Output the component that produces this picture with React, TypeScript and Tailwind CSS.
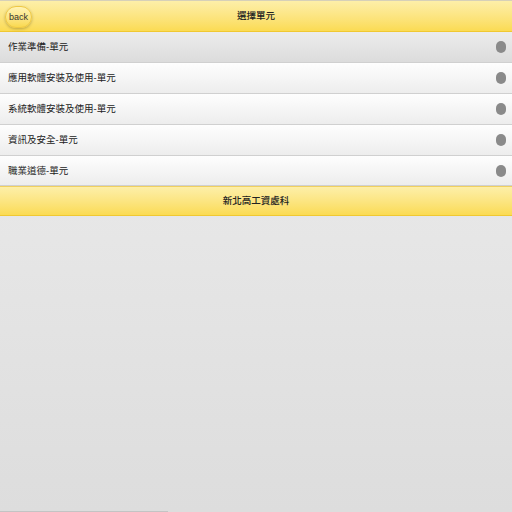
const units = [
  "作業準備-單元",
  "應用軟體安裝及使用-單元",
  "系統軟體安裝及使用-單元",
  "資訊及安全-單元",
  "職業道德-單元",
];

export default function App() {
  return (
    <div
      className="flex h-[512px] w-[512px] flex-col overflow-hidden bg-gradient-to-b from-[#eeeeee] to-[#dddddd] text-[#333]"
      style={{ fontFamily: '"Liberation Sans", "Noto Sans CJK TC", sans-serif' }}
    >
      {/* header */}
      <div className="relative flex h-8 shrink-0 items-center justify-center border-t border-b border-t-[#d6d0b8] border-b-[#f0c832] bg-gradient-to-b from-[#fdefa8] to-[#fbdb52]">
        <button className="absolute top-[5px] left-[5px] flex h-[22px] w-[27px] items-center justify-center rounded-full border border-[#eec845] bg-gradient-to-b from-[#fff3b4] to-[#fad94e] text-[9px] leading-none text-[#333] shadow-[0_1px_3px_rgba(0,0,0,0.25)]">
          back
        </button>
        <h1 className="text-[9.5px] leading-none font-medium text-[#222]">選擇單元</h1>
      </div>

      {/* list */}
      <ul className="m-0 list-none p-0">
        {units.map((u, i) => (
          <li
            key={u}
            className={`flex items-center justify-between border-b border-[#d0d0d0] pr-[6px] pl-2 ${
              i === 0
                ? "h-[31px] bg-gradient-to-b from-[#ececec] to-[#dcdcdc]"
                : i === units.length - 1
                  ? "h-[30px] bg-gradient-to-b from-[#fefefe] to-[#ededed]"
                  : "h-[31px] bg-gradient-to-b from-[#fefefe] to-[#ededed]"
            }`}
          >
            <span className="text-[9.5px] leading-none text-[#222]">{u}</span>
            <span className="h-[12px] w-[10px] rounded-full bg-[#8a8a8a]" />
          </li>
        ))}
      </ul>

      {/* footer */}
      <div className="flex h-[30px] shrink-0 items-center justify-center border-t border-b border-t-[#f0d060] border-b-[#f0c832] bg-gradient-to-b from-[#fdefa8] to-[#fbdb52]">
        <span className="text-[9.5px] leading-none font-medium text-[#222]">新北高工資處科</span>
      </div>

      <div className="flex-1" />
      <div className="h-px w-[168px] bg-[#c4c4c4]" />
    </div>
  );
}
